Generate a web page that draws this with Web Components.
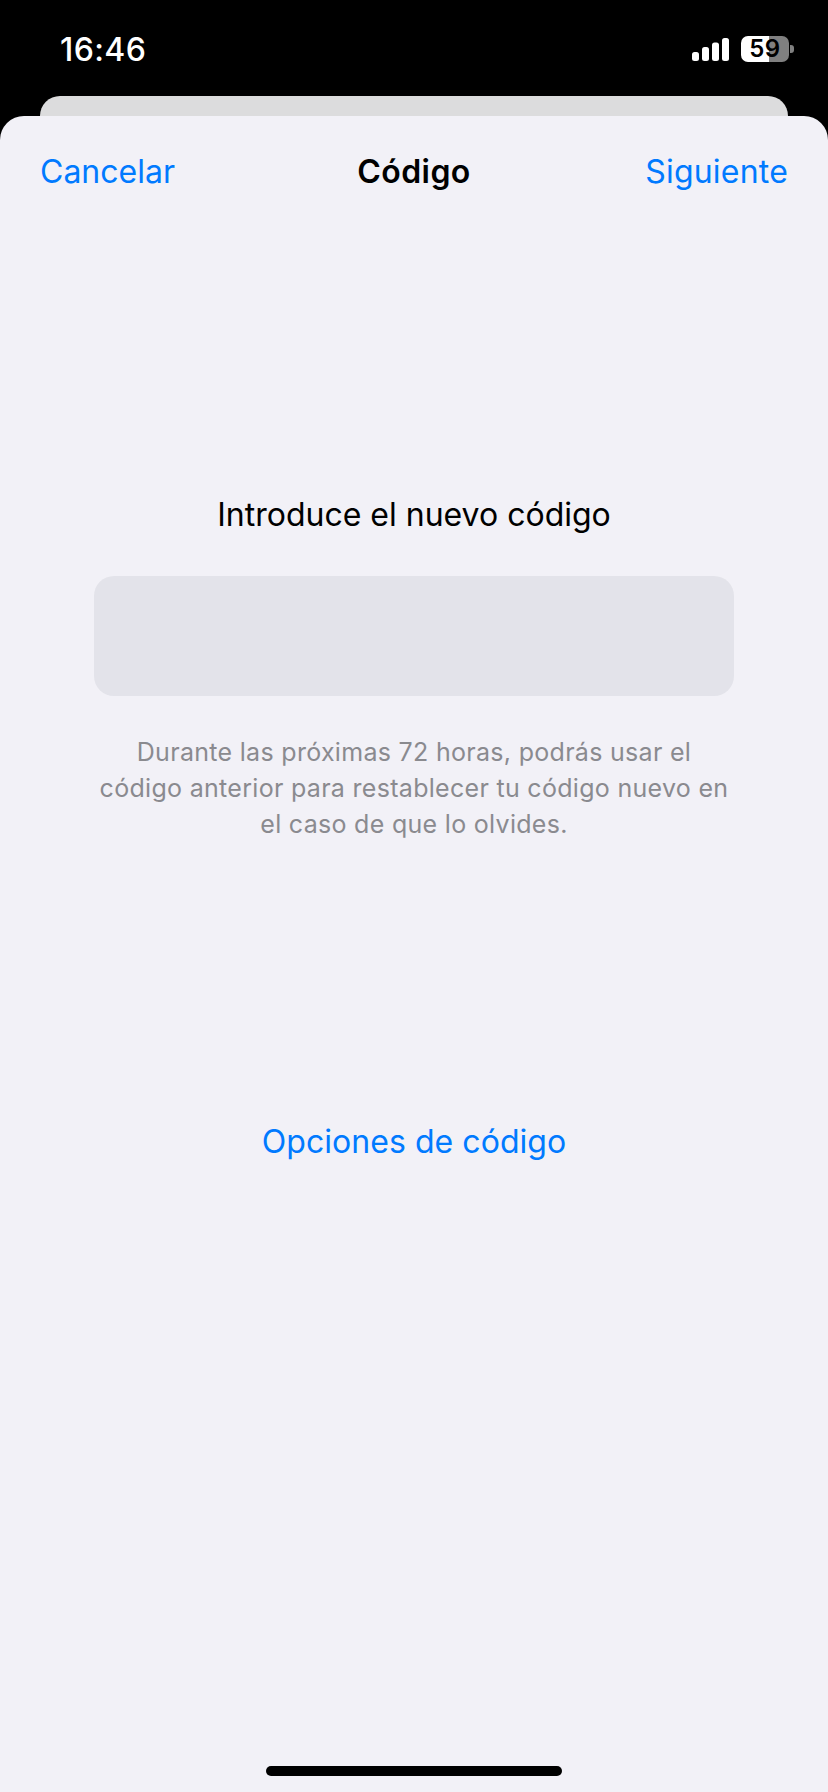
<!doctype html>
<html lang="es">
<head>
<meta charset="utf-8">
<title>Código</title>
<style>
  html, body { margin: 0; padding: 0; background: #000; }
  body { font-family: Inter, 'Liberation Sans', sans-serif; }
</style>
</head>
<body>
<x-screen>
  <x-status-bar time="16:46" battery="59"></x-status-bar>
  <x-sheet>
    <x-nav-bar slot="nav" title="Código" left="Cancelar" right="Siguiente"></x-nav-bar>
    <x-passcode
      prompt="Introduce el nuevo código"
      options="Opciones de código">
      Durante las próximas 72 horas, podrás usar el<br>código anterior para restablecer tu código nuevo en<br>el caso de que lo olvides.
    </x-passcode>
  </x-sheet>
</x-screen>

<script>
  class XScreen extends HTMLElement {
    constructor() {
      super();
      this.attachShadow( {mode: 'open'} );
      this.shadowRoot.innerHTML = /* template */ `
        <style>
          :host {
            background: #000000;
            box-sizing: border-box;
            display: flex;
            flex-direction: column;
            height: 1792px;
            overflow: hidden;
            width: 828px;
          }
        </style>
        <slot></slot>
      `;
    }
  }

  class XStatusBar extends HTMLElement {
    constructor() {
      super();
      this.attachShadow( {mode: 'open'} );
      this.shadowRoot.innerHTML = /* template */ `
        <style>
          :host {
            align-items: flex-start;
            box-sizing: border-box;
            color: #ffffff;
            display: flex;
            flex-direction: row;
            height: 96px;
            justify-content: space-between;
            padding: 30px 39px 0 60px;
          }

          .time {
            font-size: 32px;
            font-weight: 500;
            letter-spacing: 0.4px;
            line-height: 38px;
            padding-top: 1px;
          }

          .right {
            align-items: center;
            display: flex;
            flex-direction: row;
            gap: 12px;
            height: 38px;
          }

          svg {
            display: block;
          }

          .battery {
            align-items: center;
            background: linear-gradient( 90deg, #ffffff 0, #ffffff 28px, #808080 28px );
            border-radius: 7px;
            color: #000000;
            display: flex;
            font-size: 24px;
            font-weight: 600;
            height: 26px;
            justify-content: center;
            letter-spacing: 0.6px;
            line-height: 26px;
            position: relative;
            width: 48px;
          }

          .battery::after {
            background: #808080;
            border-radius: 0 3px 3px 0;
            content: '';
            height: 8px;
            left: 49px;
            position: absolute;
            top: 9px;
            width: 4px;
          }
        </style>
        <span class="time"></span>
        <div class="right">
          <svg width="37" height="23" viewBox="0 0 37 23" fill="#ffffff">
            <rect x="0" y="14" width="7" height="9" rx="2.5"/>
            <rect x="10" y="9" width="7" height="14" rx="2.5"/>
            <rect x="20" y="4.5" width="7" height="18.5" rx="2.5"/>
            <rect x="30" y="0" width="7" height="23" rx="2.5"/>
          </svg>
          <div class="battery"></div>
        </div>
      `;
      this.shadowRoot.querySelector( '.time' ).textContent = this.getAttribute( 'time' );
      this.shadowRoot.querySelector( '.battery' ).textContent = this.getAttribute( 'battery' );
    }
  }

  class XSheet extends HTMLElement {
    constructor() {
      super();
      this.attachShadow( {mode: 'open'} );
      this.shadowRoot.innerHTML = /* template */ `
        <style>
          :host {
            display: flex;
            flex-direction: column;
            flex-grow: 1;
            min-height: 0;
          }

          .behind {
            background: #dcdcdd;
            border-radius: 20px 20px 0 0;
            height: 20px;
            margin: 0 40px;
          }

          .sheet {
            background: #f2f1f7;
            border-radius: 24px 24px 0 0;
            display: flex;
            flex-direction: column;
            flex-grow: 1;
            min-height: 0;
          }

          .home {
            background: #000000;
            border-radius: 5px;
            height: 10px;
            margin: auto auto 16px;
            width: 296px;
          }
        </style>
        <div class="behind"></div>
        <div class="sheet">
          <slot name="nav"></slot>
          <slot></slot>
          <div class="home"></div>
        </div>
      `;
    }
  }

  class XNavBar extends HTMLElement {
    constructor() {
      super();
      this.attachShadow( {mode: 'open'} );
      this.shadowRoot.innerHTML = /* template */ `
        <style>
          :host {
            align-items: center;
            box-sizing: border-box;
            display: grid;
            font-size: 32px;
            grid-template-columns: 1fr auto 1fr;
            height: 112px;
            line-height: 40px;
            padding: 0 40px;
          }

          span {
            color: #007aff;
            font-weight: 400;
            letter-spacing: 0;
          }

          strong {
            color: #000000;
            font-weight: 600;
            letter-spacing: 0.45px;
          }

          .right {
            letter-spacing: 0.2px;
            text-align: right;
          }
        </style>
        <span class="left"></span>
        <strong></strong>
        <span class="right"></span>
      `;
      this.shadowRoot.querySelector( '.left' ).textContent = this.getAttribute( 'left' );
      this.shadowRoot.querySelector( 'strong' ).textContent = this.getAttribute( 'title' );
      this.shadowRoot.querySelector( '.right' ).textContent = this.getAttribute( 'right' );
    }
  }

  class XPasscode extends HTMLElement {
    constructor() {
      super();
      this.attachShadow( {mode: 'open'} );
      this.shadowRoot.innerHTML = /* template */ `
        <style>
          :host {
            align-items: center;
            display: flex;
            flex-direction: column;
            padding-top: 267px;
          }

          h2 {
            color: #000000;
            font-size: 32px;
            font-weight: 400;
            letter-spacing: 0;
            line-height: 40px;
            margin: 0;
          }

          .field {
            background: #e3e3ea;
            border-radius: 20px;
            height: 120px;
            margin-top: 41px;
            width: 640px;
          }

          p {
            color: #8a8a8f;
            font-size: 25px;
            font-weight: 400;
            letter-spacing: 0.3px;
            line-height: 36px;
            margin: 38px 0 0;
            text-align: center;
            white-space: nowrap;
          }

          a {
            color: #007aff;
            font-size: 32px;
            letter-spacing: 0.05px;
            line-height: 40px;
            margin-top: 280px;
          }
        </style>
        <h2></h2>
        <div class="field"></div>
        <p><slot></slot></p>
        <a></a>
      `;
      this.shadowRoot.querySelector( 'h2' ).textContent = this.getAttribute( 'prompt' );
      this.shadowRoot.querySelector( 'a' ).textContent = this.getAttribute( 'options' );
    }
  }

  window.customElements.define( 'x-screen', XScreen );
  window.customElements.define( 'x-status-bar', XStatusBar );
  window.customElements.define( 'x-sheet', XSheet );
  window.customElements.define( 'x-nav-bar', XNavBar );
  window.customElements.define( 'x-passcode', XPasscode );
</script>
</body>
</html>
